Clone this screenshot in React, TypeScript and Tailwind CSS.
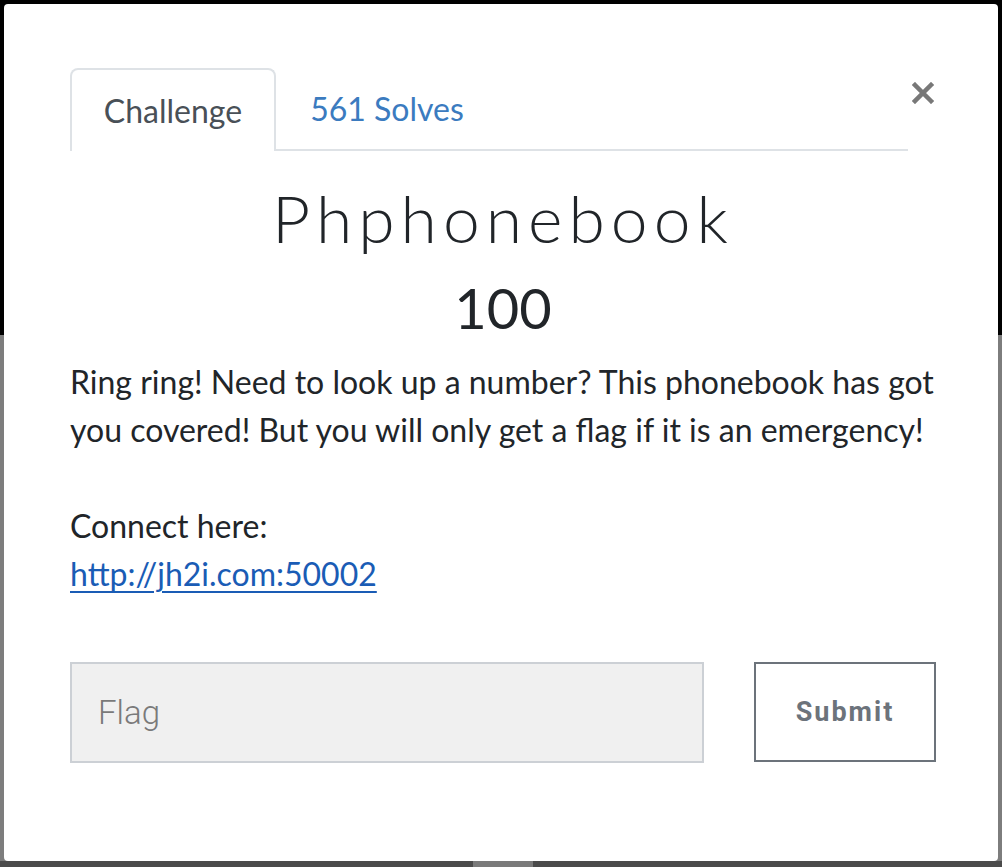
import React from 'react';

const lato = { fontFamily: 'Lato, "Open Sans", sans-serif' };

const CloseIcon: React.FC = () => (
  <svg width="22" height="22" viewBox="0 0 22 22" className="block">
    <path d="M3 3 L19 19 M19 3 L3 19" stroke="#787878" strokeWidth="4.5" strokeLinecap="square" />
  </svg>
);

const Backdrop: React.FC = () => (
  <div className="flex flex-col h-full">
    <div className="h-[335px] bg-black relative">
      <div className="h-[4px] overflow-hidden flex gap-[45px] text-[#5a5a5a] text-[28px] leading-[4px]" style={lato}>
        <span className="-mt-[20px]">Shells</span>
        <span className="-mt-[20px]">Pics</span>
        <span className="-mt-[20px]">Scoreboard</span>
        <span className="-mt-[20px]">Challenges</span>
      </div>
    </div>
    <div className="flex-1 bg-[#7d7d7d]"></div>
    <div className="h-[6px] bg-[#4b4b4b] flex">
      <div className="ml-[473px] w-[60px] bg-[#7a7a7a]"></div>
    </div>
  </div>
);

const App: React.FC = () => {
  return (
    <div className="w-[1002px] h-[867px] relative overflow-hidden bg-black">
      <Backdrop />
      <div
        className="absolute left-[4px] top-[4px] w-[994px] h-[857px] bg-white rounded-[4px] flex flex-col pl-[66px] pr-[62px] pt-[64px]"
        style={lato}
      >
        <div className="flex items-start">
          <div className="w-[838px] shrink-0 flex items-end border-b-2 border-[#dee2e6] h-[83px]">
            <div className="w-[206px] h-[83px] -mb-[2px] border-2 border-b-0 border-[#dee2e6] rounded-t-[8px] bg-white flex items-center justify-center text-[32px] text-[#495057]">
              Challenge
            </div>
            <div className="w-[222px] h-[81px] flex items-center justify-center text-[32px] text-[#3b7bbf]">
              561 Solves
            </div>
          </div>
          <div className="ml-[4px] mt-[14px]">
            <CloseIcon />
          </div>
        </div>

        <h1 className="mt-[27px] text-center text-[66px] leading-[80px] font-light tracking-[6px] text-[#212529]">
          Phphonebook
        </h1>
        <h2 className="mt-[18px] text-center text-[56px] leading-[64px] text-[#212529]">100</h2>

        <div className="mt-[18px] text-[32px] leading-[48px] text-[#212529]">
          <p>
            Ring ring! Need to look up a number? This phonebook has got you covered! But you will only get a flag if it
            is an emergency!
          </p>
          <p className="mt-[48px]">Connect here:</p>
          <a href="#" className="text-[#1a5cb5] underline underline-offset-[5px] decoration-[2px]">
            http://jh2i.com:50002
          </a>
        </div>

        <div className="mt-[64px] flex gap-[50px]">
          <input
            placeholder="Flag"
            className="w-[634px] shrink-0 h-[101px] bg-[#f0f0f0] border-2 border-[#ccd0d5] px-[26px] text-[33px] text-[#333] placeholder:text-[#7a7a7a] outline-none"
            style={{ fontFamily: 'Roboto, "Noto Sans", sans-serif', fontWeight: 300 }}
          />
          <button
            className="w-[182px] shrink-0 h-[100px] border-2 border-[#6c737b] bg-white text-[27px] font-bold tracking-[2px] text-[#6c737b]"
            style={{ fontFamily: 'Roboto, "Noto Sans", sans-serif' }}
          >
            Submit
          </button>
        </div>
      </div>
    </div>
  );
};

export default App;
